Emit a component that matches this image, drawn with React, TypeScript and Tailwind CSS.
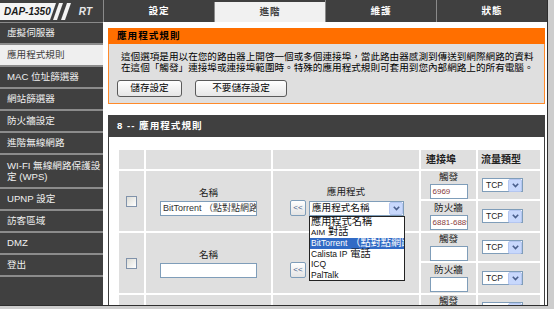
import React from "react"

const menu = [
  "虛擬伺服器",
  "應用程式規則",
  "MAC 位址篩選器",
  "網站篩選器",
  "防火牆設定",
  "進階無線網路",
  "WPS",
  "UPNP 設定",
  "訪客區域",
  "DMZ",
  "登出",
]

const tabs = ["設定", "進階", "維護", "狀態"]

function Chevron() {
  return (
    <svg width="7" height="5" viewBox="0 0 7 5">
      <path d="M0.8 0.8 L3.5 3.6 L6.2 0.8" fill="none" stroke="#4a5f8c" strokeWidth="1.6" />
    </svg>
  )
}

function DropBtn() {
  return (
    <span className="flex h-[13px] w-[14px] shrink-0 items-center justify-center rounded-[2px] border border-[#b4c6f0] bg-[#c8d8fc]">
      <Chevron />
    </span>
  )
}

function TcpSelect() {
  return (
    <div className="flex h-[14px] w-[41px] items-center border border-[#7f9db9] bg-white">
      <span className="flex-1 pl-[3px] text-[8.5px] leading-none text-[#222]">TCP</span>
      <DropBtn />
    </div>
  )
}

function Checkbox() {
  return <div className="mx-auto h-[11px] w-[11px] border border-[#8092aa] bg-linear-to-br from-[#dcdcd6] to-white" />
}

function PortCell({ label, value }: { label: string, value?: string }) {
  return (
    <td className="bg-[#dfdfdf] p-0 align-middle">
      <div className="flex flex-col items-center gap-[2px]">
        <span className="text-[9.6px] leading-[11px] text-[#222]">{label}</span>
        <div className="h-[15px] w-[38px] overflow-hidden whitespace-nowrap border border-[#7f9db9] bg-white pl-[2px] text-[8px] leading-[13px] text-[#8a3c3c]">
          {value}
        </div>
      </div>
    </td>
  )
}

function TrafficCell() {
  return (
    <td className="bg-[#dfdfdf] p-0 pl-[4px] align-middle">
      <TcpSelect />
    </td>
  )
}

function NameCell({ value }: { value?: string }) {
  return (
    <td rowSpan={2} className="bg-[#dfdfdf] p-0 align-middle">
      <div className="flex flex-col items-center gap-[2px]">
        <span className="text-[9.6px] leading-[12px] text-[#222]">名稱</span>
        <div className="h-[15px] w-[97px] overflow-hidden whitespace-nowrap border border-[#7f9db9] bg-white pl-[2px] text-[9px] leading-[13px] text-[#333]">
          {value}
        </div>
      </div>
    </td>
  )
}

// the second row sits under the open list, so its label and select are hidden
function AppCell({ open, covered }: { open?: boolean, covered?: boolean }) {
  return (
    <td rowSpan={2} className="bg-[#dfdfdf] p-0 align-middle">
      <div className="flex flex-col items-center gap-[2px]">
        <span className={covered ? "invisible text-[9.6px] leading-[12px]" : "text-[9.6px] leading-[12px] text-[#222]"}>應用程式</span>
        <div className="flex items-center gap-[3px] pl-[2px]">
          <button
            type="button"
            className="flex h-[16px] w-[16px] items-center justify-center rounded-[2px] border border-[#7f9db9] bg-linear-to-b from-white to-[#e4e4e4] text-[8px] leading-none text-[#4a5f8c]"
          >
            &lt;&lt;
          </button>
          <div className="relative">
            <div className={covered ? "invisible h-[15px] w-[95px]" : "flex h-[15px] w-[95px] items-center border border-[#7f9db9] bg-white"}>
              {!covered && <span className="flex-1 pl-[2px] text-[9.6px] leading-none text-[#111]">應用程式名稱</span>}
              {!covered && <DropBtn />}
            </div>
            {open && (
              <div className="absolute top-[15px] left-0 z-10 w-[96px] border border-[#222] bg-white text-[10.2px] leading-[10.4px] text-[#111]">
                <div className="pl-[1px]">應用程式名稱</div>
                <div className="pl-[1px]"><span className="text-[8px]">AIM</span> 對話</div>
                <div className="overflow-hidden whitespace-nowrap bg-[#316ac5] pl-[1px] text-white"><span className="text-[8.5px]">BitTorrent</span> （點對點網路）</div>
                <div className="pl-[1px]"><span className="text-[8.5px]">Calista IP</span> 電話</div>
                <div className="pl-[1px] text-[8.5px]">ICQ</div>
                <div className="pl-[1px] text-[8.5px]">PalTalk</div>
              </div>
            )}
          </div>
        </div>
      </div>
    </td>
  )
}

function RuleRows({ name, open, covered, trig, fire }: { name?: string, open?: boolean, covered?: boolean, trig?: string, fire?: string }) {
  return (
    <>
      <tr className="h-[28px]">
        <td rowSpan={2} className="bg-[#dfdfdf] p-0 align-middle"><Checkbox /></td>
        <NameCell value={name} />
        <AppCell open={open} covered={covered} />
        <PortCell label="觸發" value={trig} />
        <TrafficCell />
      </tr>
      <tr className="h-[30px]">
        <PortCell label="防火牆" value={fire} />
        <TrafficCell />
      </tr>
    </>
  )
}

export default function App() {
  return (
    <div className="h-[309px] w-[554px] overflow-hidden bg-[#cdcdcd] font-['Liberation_Sans','Noto_Sans_CJK_TC',sans-serif]">
      <div className="flex h-[306px] w-[548px] flex-col overflow-hidden border-r border-b border-[#2e2e2e] bg-white">
        {/* top bar */}
        <div className="flex h-[22px] shrink-0 bg-[#404040]">
          <div className="relative flex w-[103px] items-center">
            <svg className="absolute inset-0" width="103" height="22" viewBox="0 0 103 22">
              <polygon points="0,3 56,3 50,20 0,20" fill="#f4f4f4" />
              <polygon points="59,3 63,3 57,20 53,20" fill="#f4f4f4" />
              <polygon points="67,3 71,3 65,20 61,20" fill="#f4f4f4" />
            </svg>
            <span className="relative pl-[4px] text-[10px] font-bold italic text-[#1a1a1a]">DAP-1350</span>
            <span className="relative ml-auto pr-[11px] text-[10px] font-bold italic text-[#e8e8e8]">RT</span>
          </div>
          {tabs.map(t =>
            t === "進階"
              ? (
                  <div key={t} className="mt-[2px] flex w-[111px] items-center justify-center border-l border-[#8a8a8a] bg-[#f1f1f1] text-[9.6px] font-bold tracking-[1px] text-[#404040]">
                    {t}
                  </div>
                )
              : (
                  <div key={t} className="flex w-[111px] items-center justify-center border-l border-[#8a8a8a] text-[9.6px] font-bold tracking-[1px] text-white">
                    {t}
                  </div>
                ),
          )}
        </div>

        <div className="flex min-h-0 flex-1">
          {/* sidebar */}
          <div className="flex w-[103px] shrink-0 flex-col border-t border-[#8a8a8a] bg-[#404040]">
            {menu.map(m => {
              if (m === "WPS") {
                return (
                  <div key={m} className="flex h-[34px] flex-col justify-center border-b-2 border-[#8c8c8c] pl-[7px] text-[9.6px] leading-[11px] text-[#f0f0f0]">
                    <span>WI-FI 無線網路保護設</span>
                    <span>定 (WPS)</span>
                  </div>
                )
              }
              const active = m === "應用程式規則"
              return (
                <div
                  key={m}
                  className={active
                    ? "flex h-[22px] items-center border-b-2 border-[#8c8c8c] bg-[#efefef] pl-[7px] text-[9.6px] text-[#404040]"
                    : "flex h-[22px] items-center border-b-2 border-[#8c8c8c] pl-[7px] text-[9.6px] text-[#f0f0f0]"}
                >
                  {m}
                </div>
              )
            })}
          </div>

          {/* main */}
          <div className="min-w-0 flex-1 overflow-hidden">
            <div className="mt-[6px] ml-[5px] w-[437px]">
              <div className="flex h-[16px] items-center bg-[#ff6f00] pl-[9px] text-[9.6px] font-bold tracking-[1px] text-black">
                應用程式規則
              </div>
              <div className="border-x border-b border-[#ff8a2a] bg-[#dfdfdf] pt-[7px] pr-[4px] pb-[6px] pl-[8px]">
                <div className="pl-[4px] text-[9.6px] leading-[11px] whitespace-nowrap text-black">
                  <div>這個選項是用以在您的路由器上開啓一個或多個連接埠，當此路由器感測到傳送到網際網路的資料</div>
                  <div>在這個「觸發」連接埠或連接埠範圍時。特殊的應用程式規則可套用到您內部網路上的所有電腦。</div>
                </div>
                <div className="mt-[7px] flex gap-[13px]">
                  <button type="button" className="h-[17px] w-[65px] rounded-[3px] border border-[#5a5a5a] bg-linear-to-b from-white to-[#e6e6e6] text-[9.6px] text-black">
                    儲存設定
                  </button>
                  <button type="button" className="h-[17px] w-[92px] rounded-[3px] border border-[#5a5a5a] bg-linear-to-b from-white to-[#e6e6e6] text-[9.6px] text-black">
                    不要儲存設定
                  </button>
                </div>
              </div>
            </div>

            <div className="mt-[11px] ml-[5px] w-[437px] border-x border-[#404040]">
              <div className="flex h-[22px] items-center bg-[#404040] pl-[8px] text-[9.6px] font-bold tracking-[1px] whitespace-pre text-white">
                8 -- 應用程式規則
              </div>
              <div className="pt-[11px] pl-[8px]">
                <table className="w-[425px] table-fixed border-separate border-spacing-[2px]">
                  <colgroup>
                    <col className="w-[25px]" />
                    <col className="w-[125px]" />
                    <col className="w-[146px]" />
                    <col className="w-[55px]" />
                    <col className="w-[62px]" />
                  </colgroup>
                  <tbody>
                    <tr className="h-[19px]">
                      <td className="bg-[#dfdfdf] p-0" />
                      <td className="bg-[#dfdfdf] p-0" />
                      <td className="bg-[#dfdfdf] p-0" />
                      <td className="bg-[#dfdfdf] p-0 pl-[5px] text-[10px] font-bold text-[#222]">連接埠</td>
                      <td className="bg-[#dfdfdf] p-0 pl-[3px] text-[10px] font-bold text-[#222]">流量類型</td>
                    </tr>
                    <RuleRows name="BitTorrent （點對點網路）" open trig="6969" fire="6881-6889" />
                    <RuleRows covered />
                    <RuleRows />
                  </tbody>
                </table>
              </div>
            </div>
          </div>
        </div>
      </div>
    </div>
  )
}
